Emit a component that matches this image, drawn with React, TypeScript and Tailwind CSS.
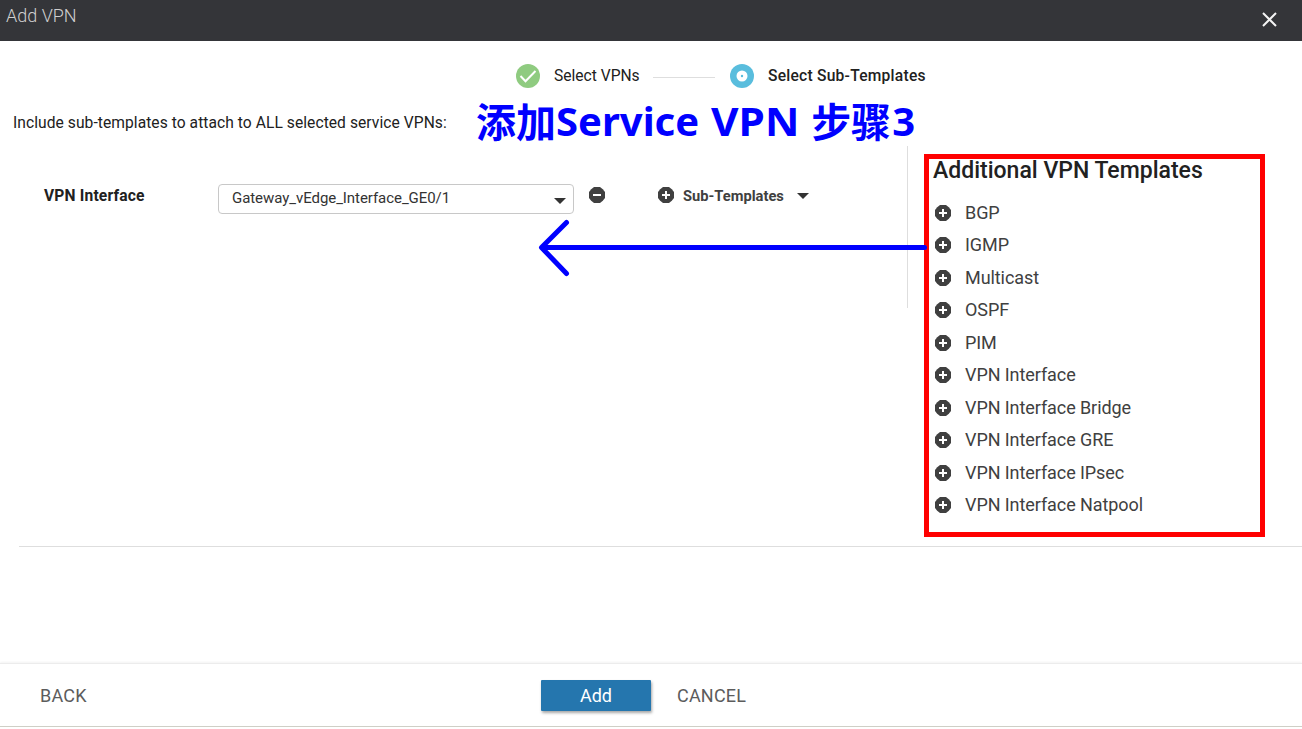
const templates = [
  'BGP',
  'IGMP',
  'Multicast',
  'OSPF',
  'PIM',
  'VPN Interface',
  'VPN Interface Bridge',
  'VPN Interface GRE',
  'VPN Interface IPsec',
  'VPN Interface Natpool',
];

function CircleIcon({ plus = false }: { plus?: boolean }) {
  return (
    <svg width="16" height="16" viewBox="0 0 16 16" className="block shrink-0">
      <path d="M5 0h6l2.800 2.200L16 5v6l-2.200 2.800L11 16H5l-2.800-2.200L0 11V5l2.200-2.800z" fill="#404040" />
      <path d={plus ? 'M4 8h8M8 4v8' : 'M4 8h8'} stroke="#fff" strokeWidth="2" />
    </svg>
  );
}

function Caret() {
  return (
    <svg width="12" height="6" viewBox="0 0 12 6" className="block shrink-0">
      <path d="M0 0h12L6 6z" fill="#333" />
    </svg>
  );
}

function Header() {
  return (
    <header className="flex h-[41px] justify-between bg-[#343539] pl-[6px] pr-[25px]">
      <h1 className="mt-[4px] h-6 text-[18px] leading-6 font-light text-[#cfcfcf]">Add VPN</h1>
      <svg width="15" height="15" viewBox="0 0 15 15" className="mt-[12px]">
        <path d="M1 1l13 13M14 1L1 14" stroke="#f4f4f4" strokeWidth="2" />
      </svg>
    </header>
  );
}

function Stepper() {
  return (
    <div className="flex h-6 items-center pl-[516px] text-[#212121]">
      <svg width="24" height="24" viewBox="0 0 24 24">
        <circle cx="12" cy="12" r="12" fill="#8fcb80" />
        <path d="M4.500 12l5 5.200L19.500 7" fill="none" stroke="#fff" strokeWidth="2" />
      </svg>
      <span className="ml-[14px] w-[86px] text-[15.600px] leading-6 whitespace-nowrap">Select VPNs</span>
      <span className="mt-[3px] ml-[13px] h-px w-[62px] bg-[#dedede]" />
      <svg width="24" height="24" viewBox="0 0 24 24" className="ml-[15px]">
        <circle cx="12" cy="12" r="12" fill="#59bddd" />
        <circle cx="12" cy="12" r="5.500" fill="#fff" />
        <circle cx="12" cy="12" r="1.200" fill="#59bddd" />
      </svg>
      <span className="ml-[14px] text-[15.600px] leading-6 font-medium tracking-[0.24px] whitespace-nowrap">Select Sub-Templates</span>
    </div>
  );
}

function Footer() {
  return (
    <footer className="mt-[116px] flex h-[64px] items-center border-t border-b border-t-[#ececec] border-b-[#cfcfc6] text-[18px] text-[#5c5c5c] shadow-[0_-1px_2px_rgba(0,0,0,0.05)]">
      <button className="ml-[40px] w-[501px] text-left tracking-[0.2px]">BACK</button>
      <button className="h-[31px] w-[110px] rounded-[1px] bg-[#2576ae] text-white shadow-[1px_2px_3px_rgba(0,0,0,0.35)]">Add</button>
      <button className="ml-[26px] tracking-[0.2px]">CANCEL</button>
    </footer>
  );
}

export default function App() {
  return (
    <div className="relative h-[729px] w-[1302px] overflow-hidden bg-white font-['Roboto','Noto_Sans_CJK_SC',sans-serif]">
      <Header />
      <div className="pt-[23px]">
        <Stepper />
      </div>
      <p className="mt-[23px] h-6 pl-[13px] text-[15.600px] leading-6 tracking-[0.06px] text-[#212121]">
        Include sub-templates to attach to ALL selected service VPNs:
      </p>
      <main className="flex h-[411px] pt-[11px]">
        <section className="flex h-[162px] w-[908px] items-start border-r border-[#dedede]">
          <label className="mt-[38px] ml-[44px] w-[174px] text-[15.600px] leading-6 font-bold tracking-[0.160px] text-[#212121]">VPN Interface</label>
          <button className="mt-[38px] flex h-[30px] w-[356px] items-center justify-between rounded-[4px] border border-[#c8c8c8] pr-[7px] pl-[13px] text-[15px] leading-5 text-[#333]">
            <span className="-mt-[2px] tracking-[-0.060px]">Gateway_vEdge_Interface_GE0/1</span>
            <span className="mt-[4px]"><Caret /></span>
          </button>
          <div className="mt-[41px] ml-[15px]"><CircleIcon /></div>
          <div className="mt-[37px] ml-[53px] flex h-6 items-center text-[14.700px] leading-5 font-bold text-[#404040]">
            <CircleIcon plus />
            <span className="ml-[9px] mt-[2px] w-[101px] whitespace-nowrap">Sub-Templates</span>
            <span className="ml-[13px] mt-px"><Caret /></span>
          </div>
        </section>
        <aside className="pt-[11px] pl-[25px]">
          <h2 className="h-[28px] text-[23px] leading-[28px] font-medium whitespace-nowrap text-[#212121]">Additional VPN Templates</h2>
          <ul className="mt-[11.700px] pl-[2px]">
            {templates.map((name) => (
              <li key={name} className="flex h-[32.480px] items-center text-[18px] text-[#404040]">
                <CircleIcon plus />
                <span className="-mt-[1px] ml-[14px] tracking-[-0.08px] whitespace-nowrap">{name}</span>
              </li>
            ))}
          </ul>
        </aside>
      </main>
      <div className="ml-[19px] h-px bg-[#dedede]" />
      <Footer />

      <div className="absolute top-[92px] left-[476px] flex items-center text-[40px] leading-[60px] font-bold whitespace-nowrap text-[#0000ff]">
        <span className="mt-[2px]">添加</span>
        <span className="-mt-[4px] font-['Noto_Sans',sans-serif]">Service</span>
        <span className="-mt-[4px] ml-[12px] w-[100px] origin-left scale-x-[1.060] font-['Noto_Sans',sans-serif]">VPN</span>
        <span className="mt-[2px]">步骤</span>
        <span className="-mt-[4px] ml-px font-['Noto_Sans',sans-serif]">3</span>
      </div>
      <div className="absolute top-[154px] left-[924px] h-[383px] w-[341px] border-5 border-[#ff0000]" />
      <svg width="390" height="58" viewBox="0 0 390 58" className="absolute top-[219px] left-[538px]">
        <path d="M386.500 28.500H4M28.500 3.500L3.500 28.500L28.500 54.500" fill="none" stroke="#00f" strokeWidth="5" strokeLinecap="round" strokeLinejoin="round" />
      </svg>
    </div>
  );
}
